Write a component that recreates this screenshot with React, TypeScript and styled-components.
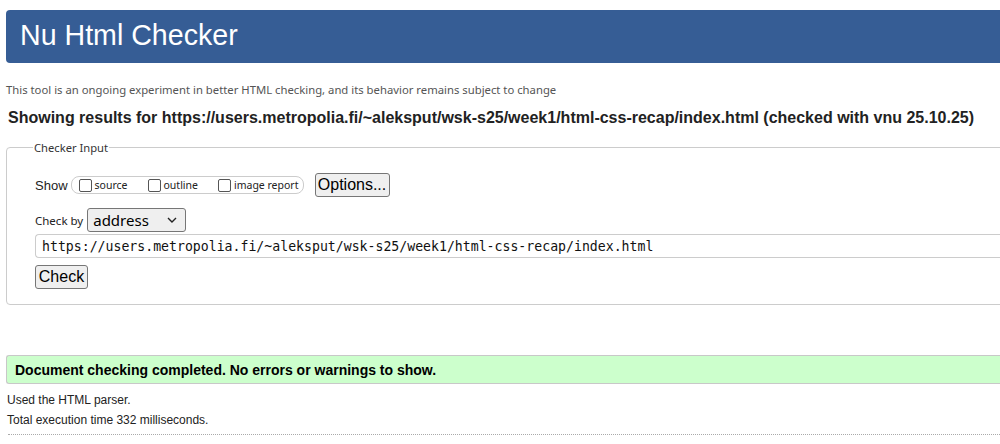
import React from "react";
import styled, { createGlobalStyle } from "styled-components";

const GlobalStyle = createGlobalStyle`
  html, body { margin: 0; padding: 0; background: #fff; overflow: hidden; }
  body { font-family: "Liberation Sans", Arial, sans-serif; color: #222; }
`;

const Page = styled.div`
  width: 1020px;
  padding: 10px 0 0 6px;
  display: flex;
  flex-direction: column;
`;

const Header = styled.header`
  height: 53px;
  background: #365d95;
  border-radius: 4px;
  display: flex;
  align-items: center;
  padding-left: 14px;
`;

const Title = styled.h1`
  margin: 0;
  font-family: "Liberation Sans", Arial, sans-serif;
  font-weight: normal;
  font-size: 28.6px;
  color: #fff;
  line-height: 1;
  padding-bottom: 2px;
`;

const Tagline = styled.p`
  margin: 19px 0 0 0;
  font-family: "Noto Sans", sans-serif;
  font-size: 11.3px;
  line-height: 16px;
  color: #555;
`;

const Results = styled.h2`
  margin: 10px 0 0 2px;
  font-family: "Liberation Sans", Arial, sans-serif;
  font-weight: bold;
  font-size: 16px;
  line-height: 20px;
  color: #222;
`;

const Fieldset = styled.fieldset`
  margin: 12px 0 0 0;
  padding: 12px 0 15px 28px;
  border: 1px solid #ccc;
  border-radius: 4px;
  display: flex;
  flex-direction: column;
`;

const Legend = styled.legend`
  font-family: "Noto Sans", sans-serif;
  font-size: 11.2px;
  color: #333;
  padding: 0 1px;
  margin-left: -2px;
`;

const Row = styled.div<{ $top?: number }>`
  display: flex;
  align-items: center;
  margin-top: ${(p) => p.$top ?? 0}px;
`;

const Label = styled.span<{ $segoe?: boolean }>`
  font-family: ${(p) => (p.$segoe ? '"Noto Sans", sans-serif' : '"Liberation Sans", Arial, sans-serif')};
  font-size: ${(p) => (p.$segoe ? "11.5px" : "13px")};
  color: #222;
  margin-right: ${(p) => (p.$segoe ? 4 : 3)}px;
`;

const Pill = styled.div`
  display: flex;
  align-items: center;
  height: 16px;
  width: 224px;
  padding: 0 0 0 7px;
  box-sizing: content-box;
  border: 1px solid #ccc;
  border-radius: 8px;
  gap: 20px;
  margin-right: 11px;
`;

const CheckLabel = styled.label`
  display: flex;
  align-items: center;
  gap: 3px;
  font-family: "Noto Sans", sans-serif;
  font-size: 10.5px;
  color: #222;
`;

const Box = styled.span`
  width: 13px;
  height: 13px;
  border: 1px solid #555;
  border-radius: 2px;
  background: #fff;
  box-sizing: border-box;
  display: inline-block;
`;

const Button = styled.button<{ $w: number }>`
  width: ${(p) => p.$w}px;
  height: 24px;
  padding: 0;
  border: 1px solid #767676;
  border-radius: 3px;
  background: #efefef;
  font-family: "Liberation Sans", Arial, sans-serif;
  font-size: 16px;
  color: #000;
  display: flex;
  align-items: center;
  justify-content: center;
`;

const Select = styled.div`
  width: 99px;
  height: 24px;
  box-sizing: border-box;
  border: 1px solid #767676;
  border-radius: 3px;
  background: #efefef;
  display: flex;
  align-items: center;
  justify-content: space-between;
  padding: 0 8px 0 5px;
  font-family: "Noto Sans", sans-serif;
  font-size: 15px;
  color: #000;
`;

const UrlInput = styled.div`
  height: 24px;
  box-sizing: border-box;
  border: 1px solid #ccc;
  border-right: none;
  border-radius: 4px 0 0 4px;
  display: flex;
  align-items: center;
  padding-left: 6px;
  margin-top: 2px;
  font-family: "DejaVu Sans Mono", monospace;
  font-size: 13.2px;
  color: #111;
`;

const Success = styled.div`
  margin-top: 50px;
  height: 29px;
  box-sizing: border-box;
  background: #ccffcc;
  border: 1px solid #c8c8c8;
  border-width: 1px 0 1px 1px;
  border-radius: 3px 0 0 3px;
  display: flex;
  align-items: center;
  padding-left: 8px;
  font-family: "Liberation Sans", Arial, sans-serif;
  font-weight: bold;
  font-size: 14px;
  color: #000;
`;

const Info = styled.p<{ $top: number }>`
  margin: ${(p) => p.$top}px 0 0 1px;
  font-family: "Liberation Sans", Arial, sans-serif;
  font-size: 12px;
  line-height: 14px;
  color: #222;
`;

const Dotted = styled.hr`
  margin: 7px 0 0 2px;
  border: none;
  border-top: 1px dotted #aaa;
  height: 0;
`;

export default function App() {
  return (
    <>
      <GlobalStyle />
      <Page>
        <Header>
          <Title>Nu Html Checker</Title>
        </Header>
        <Tagline>
          This tool is an ongoing experiment in better HTML checking, and its behavior remains subject to change
        </Tagline>
        <Results>
          Showing results for https://users.metropolia.fi/~aleksput/wsk-s25/week1/html-css-recap/index.html (checked with vnu 25.10.25)
        </Results>
        <Fieldset>
          <Legend>Checker Input</Legend>
          <Row $top={6}>
            <Label>Show</Label>
            <Pill>
              <CheckLabel><Box />source</CheckLabel>
              <CheckLabel><Box />outline</CheckLabel>
              <CheckLabel><Box />image report</CheckLabel>
            </Pill>
            <Button $w={75}>Options...</Button>
          </Row>
          <Row $top={11}>
            <Label $segoe>Check by</Label>
            <Select>
              <span>address</span>
              <svg width="10" height="6" viewBox="0 0 10 6" fill="none">
                <path d="M1 1l4 4 4-4" stroke="#222" strokeWidth="1.4" />
              </svg>
            </Select>
          </Row>
          <UrlInput>https://users.metropolia.fi/~aleksput/wsk-s25/week1/html-css-recap/index.html</UrlInput>
          <Row $top={7}>
            <Button $w={53}>Check</Button>
          </Row>
        </Fieldset>
        <Success>Document checking completed. No errors or warnings to show.</Success>
        <Info $top={9}>Used the HTML parser.</Info>
        <Info $top={6}>Total execution time 332 milliseconds.</Info>
        <Dotted />
      </Page>
    </>
  );
}
